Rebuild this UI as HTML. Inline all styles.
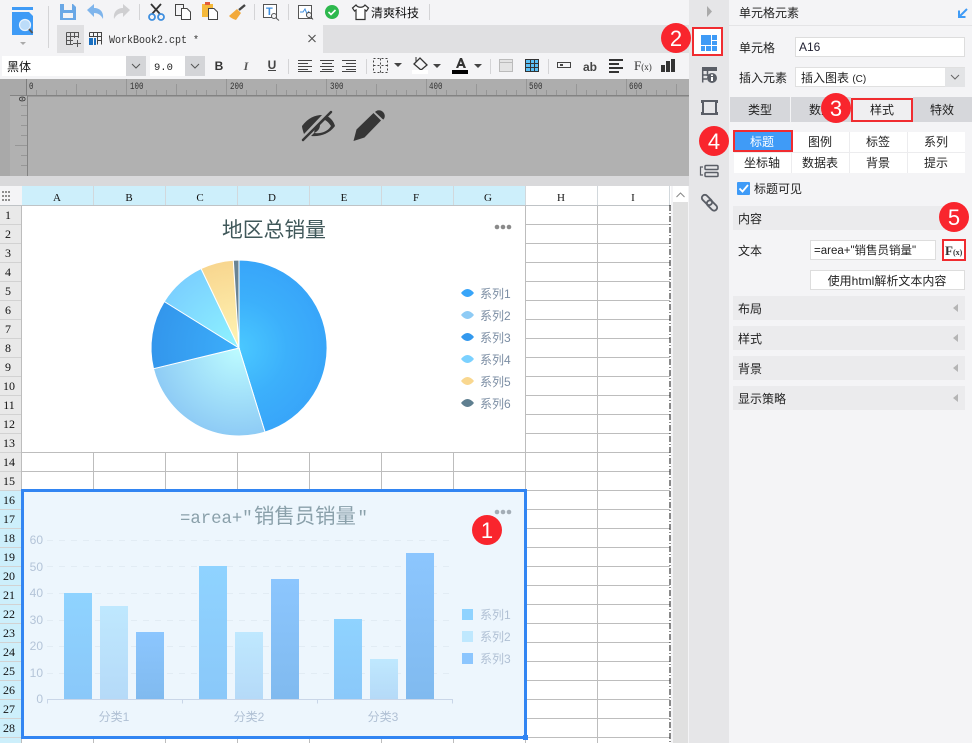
<!DOCTYPE html>
<html><head><meta charset="utf-8"><style>
html,body{margin:0;padding:0;background:#f4f4f6;width:972px;height:743px;overflow:hidden}
svg{display:block;position:absolute;left:0;top:0}
text{font-family:"Liberation Sans","Noto Sans CJK SC",sans-serif;font-size:12px;fill:#222}
.m text,text.m{font-family:"Liberation Mono","Noto Sans CJK SC",monospace}
.r text{font-family:"Liberation Serif",serif;fill:#111}
.c text,text.c{text-anchor:middle}
</style></head><body>
<svg width="972" height="743" viewBox="0 0 972 743" xmlns="http://www.w3.org/2000/svg">
<defs>
<radialGradient id="p1" gradientUnits="userSpaceOnUse" cx="239" cy="348" r="88"><stop offset="0" stop-color="#4ac8ff"/><stop offset=".55" stop-color="#3cb0fb"/><stop offset="1" stop-color="#38a5f9"/></radialGradient>
<radialGradient id="p2" gradientUnits="userSpaceOnUse" cx="239" cy="348" r="88"><stop offset="0" stop-color="#bdfcff"/><stop offset="1" stop-color="#8ecbf5"/></radialGradient>
<radialGradient id="p3" gradientUnits="userSpaceOnUse" cx="239" cy="348" r="88"><stop offset="0" stop-color="#3caefa"/><stop offset="1" stop-color="#3396ec"/></radialGradient>
<radialGradient id="p4" gradientUnits="userSpaceOnUse" cx="239" cy="348" r="88"><stop offset="0" stop-color="#8ef3ff"/><stop offset="1" stop-color="#7bd0ff"/></radialGradient>
<radialGradient id="p5" gradientUnits="userSpaceOnUse" cx="239" cy="348" r="88"><stop offset="0" stop-color="#fff5b5"/><stop offset="1" stop-color="#f8d68f"/></radialGradient>
<linearGradient id="b1" x1="0" y1="0" x2="0" y2="1"><stop offset="0" stop-color="#8fd3ff"/><stop offset="1" stop-color="#8ac8f9"/></linearGradient>
<linearGradient id="b2" x1="0" y1="0" x2="0" y2="1"><stop offset="0" stop-color="#bfe8fe"/><stop offset="1" stop-color="#b5daf8"/></linearGradient>
<linearGradient id="b3" x1="0" y1="0" x2="0" y2="1"><stop offset="0" stop-color="#8cc6fe"/><stop offset="1" stop-color="#80baef"/></linearGradient>
</defs>

<!-- base -->
<rect width="972" height="743" fill="#f4f4f6"/>
<!-- tab strip -->
<rect x="57" y="25" width="632" height="28" fill="#e0e0e2"/>
<rect x="84" y="25" width="239" height="28" fill="#f4f4f6"/>
<!-- ruler + gray area -->
<rect x="0" y="79" width="689" height="97" fill="#b1b1b1"/>
<rect x="0" y="79" width="10" height="97" fill="#a9a9a9"/>
<rect x="0" y="79" width="27" height="17" fill="#a9a9a9"/>
<rect x="27" y="79" width="662" height="16" fill="#adadad"/>
<rect x="27" y="95" width="662" height="1.500" fill="#838383"/>
<rect x="10" y="95" width="17" height="1" fill="#838383"/>
<rect x="26" y="79" width="1" height="17" fill="#7d7d7d"/>
<rect x="27" y="96" width="1" height="80" fill="#838383"/>
<path stroke="#969696" fill="none" d="M36.500 90V95M46.500 90V95M56.500 90V95M66.500 90V95M76.500 84V95M86.500 90V95M96.500 90V95M106.500 90V95M116.500 90V95M126.500 79V95M136.500 90V95M146.500 90V95M156.500 90V95M166.500 90V95M176.500 84V95M186.500 90V95M196.500 90V95M206.500 90V95M216.500 90V95M226.500 79V95M236.500 90V95M246.500 90V95M256.500 90V95M266.500 90V95M276.500 84V95M286.500 90V95M296.500 90V95M306.500 90V95M316.500 90V95M326.500 79V95M336.500 90V95M346.500 90V95M356.500 90V95M366.500 90V95M376.500 84V95M386.500 90V95M396.500 90V95M406.500 90V95M416.500 90V95M426.500 79V95M436.500 90V95M446.500 90V95M456.500 90V95M466.500 90V95M476.500 84V95M486.500 90V95M496.500 90V95M506.500 90V95M516.500 90V95M526.500 79V95M536.500 90V95M546.500 90V95M556.500 90V95M566.500 90V95M576.500 84V95M586.500 90V95M596.500 90V95M606.500 90V95M616.500 90V95M626.500 79V95M636.500 90V95M646.500 90V95M656.500 90V95M666.500 90V95M676.500 84V95"/>
<path stroke="#969696" fill="none" d="M21 105.500H27M21 115.500H27M21 125.500H27M21 135.500H27M15 145.500H27M21 155.500H27M21 165.500H27"/>
<g class="m">
<text x="29" y="89" textLength="4.500" lengthAdjust="spacingAndGlyphs" style="font-size:10.500px;fill:#333">0</text>
<text x="130" y="89" textLength="13.500" lengthAdjust="spacingAndGlyphs" style="font-size:10.500px;fill:#333">100</text>
<text x="230" y="89" textLength="13.500" lengthAdjust="spacingAndGlyphs" style="font-size:10.500px;fill:#333">200</text>
<text x="330" y="89" textLength="13.500" lengthAdjust="spacingAndGlyphs" style="font-size:10.500px;fill:#333">300</text>
<text x="429" y="89" textLength="13.500" lengthAdjust="spacingAndGlyphs" style="font-size:10.500px;fill:#333">400</text>
<text x="529" y="89" textLength="13.500" lengthAdjust="spacingAndGlyphs" style="font-size:10.500px;fill:#333">500</text>
<text x="629" y="89" textLength="13.500" lengthAdjust="spacingAndGlyphs" style="font-size:10.500px;fill:#333">600</text>
<text transform="translate(19,96) rotate(90)" style="font-size:10px;fill:#333">0</text>
</g>
<rect x="0" y="176" width="689" height="10" fill="#d9d9db"/>

<!-- eye-off -->
<path fill="#363636" d="M302 126C308 118 315 115 322 115L304 134C303 131 302 128 302 126ZM327 116C331 118 334 122 335 126C330 133 321 137 311 136L314 133C322 134 328 131 331 126C329 123 327 121 325 120L320 125C320 129 317 132 314 133L315 128L327 116Z"/>
<path stroke="#363636" stroke-width="2.400" stroke-linecap="round" d="M303 140L331 112"/>
<!-- pencil -->
<path fill="#363636" d="M353.500 141L356.500 129.500L373.500 113L381 120.500L364.500 137.500Z"/>
<path fill="#363636" d="M375.500 111.500C378 109.500 381 110 383 112C385 114 385.500 117 383.500 119.500L382.500 119L375 112Z"/>

<!-- column header -->
<rect x="0" y="186" width="22" height="19" fill="#f4f4f6"/>
<path fill="#8e8e8e" d="M2 191h2v2h-2zM5 191h2v2h-2zM8 191h2v2h-2zM2 195h2v2h-2zM5 195h2v2h-2zM8 195h2v2h-2zM2 199h2v2h-2zM5 199h2v2h-2zM8 199h2v2h-2z"/>
<rect x="22" y="186" width="504" height="19" fill="#cdeffb"/>
<rect x="526" y="186" width="145" height="19" fill="#fff"/>
<path stroke="#d2d8dc" fill="none" d="M93.500 186V205M165.500 186V205M237.500 186V205M309.500 186V205M381.500 186V205M453.500 186V205M525.500 186V205M597.500 186V205M669.500 186V205"/>
<rect x="0" y="205" width="671" height="1" fill="#bfc3c6"/>
<g class="r c">
<text x="57" y="201" style="font-size:11px">A</text><text x="129" y="201" style="font-size:11px">B</text><text x="200" y="201" style="font-size:11px">C</text><text x="272" y="201" style="font-size:11px">D</text><text x="344" y="201" style="font-size:11px">E</text><text x="416" y="201" style="font-size:11px">F</text><text x="488" y="201" style="font-size:11px">G</text><text x="561" y="201" style="font-size:11px">H</text><text x="633" y="201" style="font-size:11px">I</text>
</g>

<!-- row header -->
<rect x="0" y="206" width="21" height="284" fill="#e9e9e9"/>
<rect x="0" y="490" width="21" height="253" fill="#cdeffb"/>
<rect x="21" y="206" width="1" height="537" fill="#bdbdbd"/>
<path stroke="#d2d2d2" fill="none" d="M0 224.500H21M0 243.500H21M0 262.500H21M0 281.500H21M0 300.500H21M0 319.500H21M0 338.500H21M0 357.500H21M0 376.500H21M0 395.500H21M0 414.500H21M0 433.500H21M0 452.500H21M0 471.500H21M0 490.500H21M0 509.500H21M0 528.500H21M0 547.500H21M0 566.500H21M0 585.500H21M0 604.500H21M0 623.500H21M0 642.500H21M0 661.500H21M0 680.500H21M0 699.500H21M0 718.500H21M0 737.500H21"/>
<g class="r c">
<text x="8" y="219">1</text><text x="8" y="238">2</text><text x="8" y="257">3</text><text x="8" y="276">4</text><text x="8" y="295">5</text><text x="8" y="314">6</text><text x="8" y="333">7</text><text x="8" y="352">8</text><text x="8" y="371">9</text>
<text x="9" y="390">10</text><text x="9" y="409">11</text><text x="9" y="428">12</text><text x="9" y="447">13</text><text x="9" y="466">14</text><text x="9" y="485">15</text><text x="9" y="504">16</text><text x="9" y="523">17</text><text x="9" y="542">18</text><text x="9" y="561">19</text><text x="9" y="580">20</text><text x="9" y="599">21</text><text x="9" y="618">22</text><text x="9" y="637">23</text><text x="9" y="656">24</text><text x="9" y="675">25</text><text x="9" y="694">26</text><text x="9" y="713">27</text><text x="9" y="732">28</text>
</g>

<!-- grid -->
<rect x="22" y="206" width="649" height="537" fill="#fff"/>
<path stroke="#bdbdbd" fill="none" d="M22 224.500H670M22 243.500H670M22 262.500H670M22 281.500H670M22 300.500H670M22 319.500H670M22 338.500H670M22 357.500H670M22 376.500H670M22 395.500H670M22 414.500H670M22 433.500H670M22 452.500H670M22 471.500H670M22 490.500H670M22 509.500H670M22 528.500H670M22 547.500H670M22 566.500H670M22 585.500H670M22 604.500H670M22 623.500H670M22 642.500H670M22 661.500H670M22 680.500H670M22 699.500H670M22 718.500H670M22 737.500H670M93.500 206V743M165.500 206V743M237.500 206V743M309.500 206V743M381.500 206V743M453.500 206V743M525.500 206V743M597.500 206V743"/>
<path stroke="#111" fill="none" stroke-dasharray="6 2 1 2" d="M670 205V743"/>
<rect x="673" y="186" width="15" height="557" fill="#e0e0e0"/>
<rect x="673" y="186" width="15" height="16" fill="#fff"/>
<path stroke="#888" fill="none" d="M676.500 197L680.500 193L684.500 197"/>

<!-- pie chart -->
<rect x="22" y="206" width="503" height="246" fill="#fff"/>
<text class="c" x="274" y="237" style="font-size:20.800px;fill:#40585a">地区总销量</text>
<g fill="#8a8a8a"><circle cx="497" cy="227" r="2.300"/><circle cx="503" cy="227" r="2.300"/><circle cx="509" cy="227" r="2.300"/></g>
<g stroke="#fff" stroke-width="1">
<path fill="url(#p1)" d="M239 348V260A88 88 0 0 1 265 432.100Z"/>
<path fill="url(#p2)" d="M239 348L265 432.100A88 88 0 0 1 153.500 368.700Z"/>
<path fill="url(#p3)" d="M239 348L153.500 368.700A88 88 0 0 1 164.300 301.500Z"/>
<path fill="url(#p4)" d="M239 348L164.300 301.500A88 88 0 0 1 201.100 268.600Z"/>
<path fill="url(#p5)" d="M239 348L201.100 268.600A88 88 0 0 1 233.300 260.200Z"/>
<path fill="#6a8494" d="M239 348L233.300 260.200A88 88 0 0 1 239 260Z"/>
</g>
<path fill="#38a5f9" d="M461 293Q467.500 285 474 293Q467.500 301 461 293Z"/>
<path fill="#8ecbf5" d="M461 315Q467.500 307 474 315Q467.500 323 461 315Z"/>
<path fill="#3399ee" d="M461 337Q467.500 329 474 337Q467.500 345 461 337Z"/>
<path fill="#7bd1ff" d="M461 359Q467.500 351 474 359Q467.500 367 461 359Z"/>
<path fill="#f9d78f" d="M461 381Q467.500 373 474 381Q467.500 389 461 381Z"/>
<path fill="#5f7f90" d="M461 403Q467.500 395 474 403Q467.500 411 461 403Z"/>
<text x="480" y="298" style="fill:#7b8da3">系列1</text><text x="480" y="320" style="fill:#7b8da3">系列2</text><text x="480" y="342" style="fill:#7b8da3">系列3</text><text x="480" y="364" style="fill:#7b8da3">系列4</text><text x="480" y="386" style="fill:#7b8da3">系列5</text><text x="480" y="408" style="fill:#7b8da3">系列6</text>

<!-- bar chart -->
<rect x="22" y="491" width="503" height="246" fill="#edf6fd"/>
<text x="180" y="523" class="m" style="font-size:17.300px;fill:#8aa0aa">=area+"</text>
<text x="254" y="523" style="font-size:20.400px;fill:#8aa0aa">销售员销量</text>
<text x="357.500" y="523" class="m" style="font-size:17.300px;fill:#8aa0aa">"</text>
<g fill="#a3adb6"><circle cx="497" cy="512" r="2.300"/><circle cx="503" cy="512" r="2.300"/><circle cx="509" cy="512" r="2.300"/></g>
<path stroke="#e2ecf4" fill="none" stroke-dasharray="6 6" d="M47 540.500H449M47 566.500H449M47 593.500H449M47 620.500H449M47 646.500H449M47 673.500H449"/>
<rect x="64" y="593" width="28" height="106" fill="url(#b1)"/><rect x="100" y="606" width="28" height="93" fill="url(#b2)"/><rect x="136" y="632" width="28" height="67" fill="url(#b3)"/>
<rect x="199" y="566" width="28" height="133" fill="url(#b1)"/><rect x="235" y="632" width="28" height="67" fill="url(#b2)"/><rect x="271" y="579" width="28" height="120" fill="url(#b3)"/>
<rect x="334" y="619" width="28" height="80" fill="url(#b1)"/><rect x="370" y="659" width="28" height="40" fill="url(#b2)"/><rect x="406" y="553" width="28" height="146" fill="url(#b3)"/>
<path stroke="#c9d6e8" fill="none" d="M47.500 703.500V699.500H452.500V703.500M182.500 699.500V703.500M317.500 699.500V703.500"/>
<text x="43" y="544" style="fill:#b4c4d8;text-anchor:end">60</text><text x="43" y="571" style="fill:#b4c4d8;text-anchor:end">50</text><text x="43" y="597" style="fill:#b4c4d8;text-anchor:end">40</text><text x="43" y="624" style="fill:#b4c4d8;text-anchor:end">30</text><text x="43" y="650" style="fill:#b4c4d8;text-anchor:end">20</text><text x="43" y="677" style="fill:#b4c4d8;text-anchor:end">10</text><text x="43" y="703" style="fill:#b4c4d8;text-anchor:end">0</text>
<text class="c" x="114" y="721" style="fill:#b0c0d4">分类1</text><text class="c" x="249" y="721" style="fill:#b0c0d4">分类2</text><text class="c" x="383" y="721" style="fill:#b0c0d4">分类3</text>
<rect x="462" y="609" width="11" height="11" fill="#8fd3ff"/><rect x="462" y="631" width="11" height="11" fill="#bfe8fe"/><rect x="462" y="653" width="11" height="11" fill="#8cc6fe"/>
<text x="480" y="619" style="fill:#b0c0d4">系列1</text><text x="480" y="641" style="fill:#b0c0d4">系列2</text><text x="480" y="663" style="fill:#b0c0d4">系列3</text>
<rect x="22.500" y="490.500" width="503" height="247" fill="none" stroke="#3285f2" stroke-width="3"/>
<rect x="523" y="735" width="5" height="5" fill="#3285f2"/>

<!-- top toolbar -->
<path fill="#3f9bf6" d="M12 12H29L33 16V35H12Z"/><rect x="12" y="7" width="21" height="3" fill="#3f9bf6"/>
<circle cx="25" cy="25" r="5.500" fill="#bcdcf9" stroke="#e9f3fd" stroke-width="1.200"/><path stroke="#555" stroke-width="1.800" d="M29 29L32.500 33"/>
<path fill="#aaa" d="M20 42H26L23 45Z"/>
<path stroke="#d4d4d6" fill="none" d="M48.500 6V48M139.500 4V20M254.500 4V20M288.500 4V20M429.500 4V20M366.500 59V74M288.500 59V74M490.500 59V74M548.500 59V74"/>
<!-- save -->
<path fill="#6aa8e6" d="M60 4H73L76 7V20H60Z"/><rect x="64" y="4" width="8" height="6" fill="#f4f4f6"/><rect x="63" y="13" width="10" height="5" fill="#f4f4f6"/>
<!-- undo / redo -->
<path fill="#7fb5ec" d="M87 10L94 4V8C100 8 104 12 103 19C101 15 98 13 94 13V17Z"/>
<path fill="#cfcfd1" d="M130 10L123 4V8C117 8 113 12 114 19C116 15 119 13 123 13V17Z"/>
<!-- scissors -->
<path stroke="#333" stroke-width="1.800" fill="none" d="M151 4L160 14M161 4L152 14"/><circle cx="152" cy="17" r="3" fill="none" stroke="#3f8fe0" stroke-width="1.800"/><circle cx="161" cy="17" r="3" fill="none" stroke="#3f8fe0" stroke-width="1.800"/>
<!-- copy -->
<path fill="#f4f4f6" stroke="#444" d="M175.500 4.500H183.500V15.500H175.500Z"/><path fill="#fff" stroke="#444" d="M181.500 8.500H187L190.500 12V19.500H181.500Z"/>
<!-- paste -->
<rect x="202" y="4" width="11" height="13" fill="#f5b93a"/><rect x="205" y="2" width="5" height="3" fill="#e25b3a"/><path fill="#fff" stroke="#444" d="M208.500 8.500H214L217.500 12V19.500H208.500Z"/>
<!-- brush -->
<path fill="#f2a93b" d="M229 16L237 9L241 13L236 20C233 19 231 18 229 16Z"/><path stroke="#444" stroke-width="2.400" d="M239 10L245 5"/>
<!-- T search -->
<rect x="263.500" y="4.500" width="13" height="13" fill="#fff" stroke="#555"/><text x="266" y="15" style="font-size:11px;font-weight:bold;fill:#3f8fe0">T</text><circle cx="274" cy="16" r="2.500" fill="#f4f4f6" stroke="#555"/><path stroke="#555" d="M276 18L279 20.500"/>
<!-- chart search -->
<rect x="298.500" y="5.500" width="13" height="13" fill="#fff" stroke="#555"/><path stroke="#3f8fe0" fill="none" d="M300 12L303 12L305 9L307 14L309 11"/><circle cx="309" cy="15" r="2.500" fill="#f4f4f6" stroke="#444"/><path stroke="#444" d="M311 17L313 19.500"/>
<!-- check -->
<circle cx="332" cy="12" r="7" fill="#2db84d"/><path stroke="#fff" stroke-width="1.600" fill="none" d="M328.500 12L331 14.500L335.500 10"/>
<!-- shirt -->
<path fill="#fff" stroke="#333" stroke-width="1.200" d="M356 5L352.500 8L354.500 11L356 10V19.500H365V10L366.500 11L368.500 8L365 5C363 8 358 8 356 5Z"/>
<text x="371" y="17" style="font-size:12px;fill:#111">清爽科技</text>

<!-- tab -->
<path stroke="#555" fill="none" d="M66.500 32.500H78.500V38M66.500 32.500V44.500H73M66.500 36.500H78.500M66.500 40.500H73M70.500 32.500V44.500M74.500 32.500V38M73 43.500H81M77.500 40V47"/>
<path stroke="#444" fill="none" d="M89.500 32.500H101.500V44.500M89.500 32.500V37M89.500 36.500H101.500M93.500 32.500V37M97.500 32.500V44.500M97.500 40.500H101.500"/>
<path fill="#1a6fc0" d="M89 38H93V45H89ZM94 38H96V45H94Z"/>
<text x="109" y="43" class="m" textLength="90" lengthAdjust="spacingAndGlyphs" style="font-size:11px;fill:#333">WorkBook2.cpt *</text>
<path stroke="#555" stroke-width="1.200" d="M308.500 35L315.500 42M315.500 35L308.500 42"/>

<!-- format toolbar -->
<rect x="2" y="56" width="124" height="20" fill="#fff"/><rect x="126" y="56" width="20" height="20" fill="#d4d5d8"/>
<rect x="150" y="56" width="35" height="20" fill="#fff"/><rect x="185" y="56" width="20" height="20" fill="#d4d5d8"/>
<path stroke="#555" fill="none" d="M132 64L136 68L140 64M191 64L195 68L199 64"/>
<text x="7" y="71" style="font-size:12px;fill:#111">黑体</text>
<text x="154" y="70" class="m" style="font-size:10.500px;fill:#222">9.0</text>
<text class="c" x="219" y="70" style="font-size:12px;font-weight:bold;fill:#333">B</text>
<text class="c" x="246" y="70" style="font-size:12px;font-weight:bold;font-style:italic;fill:#555;font-family:'Liberation Serif',serif">I</text>
<text class="c" x="272" y="69" style="font-size:12px;font-weight:bold;fill:#444">U</text><rect x="268" y="70" width="8" height="1" fill="#444"/>
<path stroke="#444" fill="none" d="M298 60.500H312M298 63.500H308M298 66.500H312M298 69.500H308M298 71.500H312M320 60.500H334M322 63.500H332M320 66.500H334M322 69.500H332M320 71.500H334M342 60.500H356M346 63.500H356M342 66.500H356M346 69.500H356M342 71.500H356"/>
<path stroke="#444" fill="none" stroke-dasharray="2 2" d="M373.500 58.500H387.500V72.500H373.500ZM380.500 58.500V72.500M373.500 65.500H387.500"/>
<path fill="#444" d="M394 63H402L398 67ZM433 64H441L437 68ZM474 64H482L478 68Z"/>
<path fill="#f4f4f6" stroke="#333" stroke-width="1.300" d="M414 64L420 58L427 65L421 70Z"/><path stroke="#333" d="M416 57V62"/>
<rect x="412" y="70" width="16" height="4" fill="#fff"/>
<path fill="#333" d="M456 68L460 58H462L466 68H463.500L462.800 66H459L458.300 68ZM459.800 64H462L460.900 61Z"/>
<rect x="452" y="70" width="16" height="4" fill="#000"/>
<rect x="499.500" y="59.500" width="13" height="12" fill="#e4e4e4" stroke="#bbb"/><path stroke="#bbb" d="M499 62.500H513"/>
<rect x="525.500" y="59.500" width="13" height="12" fill="#5cc0f5" stroke="#333"/><path stroke="#333" fill="none" d="M525 63.500H539M525 67.500H539M530.500 59V72M534.500 59V72"/>
<rect x="557.500" y="62.500" width="13" height="5" fill="none" stroke="#444"/><rect x="560" y="64" width="3" height="2" fill="#444"/>
<text class="c" x="590" y="71" style="font-size:12px;font-weight:bold;fill:#444">ab</text>
<path fill="#333" d="M609 59H623V61H609ZM609 63H619V65H609ZM609 67H623V69H609ZM609 71H619V73H609Z"/>
<text x="634" y="70" style="font-family:'Liberation Serif',serif;font-size:13px;fill:#333">F<tspan style="font-size:9px">(x)</tspan></text>
<path fill="#333" d="M661 65H665V72H661ZM666 61H670V72H666ZM671 59H675V72H671Z"/>

<!-- sidebar -->
<rect x="689" y="0" width="40" height="743" fill="#e6e6e8"/>
<path fill="#aaa" d="M707 6L712 11.500L707 17Z"/>
<rect x="693" y="28" width="29" height="27" fill="#fff" stroke="#f02c30" stroke-width="2"/>
<path fill="#3f9bf6" d="M701 35H711V45H701ZM712 35H717V40H712ZM712 41H717V45H712ZM701 46H705V51H701ZM706 46H711V51H706ZM712 46H717V51H712Z"/>
<path fill="#5a5e66" d="M702 67H717V71H702Z"/>
<path stroke="#5a5e66" stroke-width="1.500" fill="none" d="M702.700 82.500V68M702.700 75H709M702.700 79H707M707.500 69V76"/><circle cx="712" cy="78" r="5" fill="#5a5e66"/><rect x="711" y="77" width="2" height="4" fill="#fff"/><rect x="711" y="74.500" width="2" height="1.500" fill="#fff"/>
<rect x="703" y="101" width="13" height="13" fill="none" stroke="#5a5e66" stroke-width="2"/><path fill="#5a5e66" d="M701 100h3v3h-3zM715 100h3v3h-3zM701 112h3v3h-3zM715 112h3v3h-3z"/>
<rect x="705" y="165.500" width="13" height="4" rx="1" fill="none" stroke="#5a5e66" stroke-width="1.500"/><rect x="705" y="172.500" width="13" height="4" rx="1" fill="none" stroke="#5a5e66" stroke-width="1.500"/><path stroke="#5a5e66" fill="none" stroke-width="1.200" d="M703 167H700.500V175H703"/>
<rect x="-6" y="-3" width="12" height="6" rx="3" transform="translate(707,200) rotate(45)" fill="none" stroke="#5a5e66" stroke-width="1.900"/>
<rect x="-6" y="-3" width="12" height="6" rx="3" transform="translate(712,205.500) rotate(45)" fill="none" stroke="#5a5e66" stroke-width="1.900"/>

<!-- right panel -->
<rect x="729" y="0" width="243" height="743" fill="#f4f4f6"/>
<rect x="729" y="25" width="243" height="1" fill="#e4e4e6"/>
<text x="739" y="17" style="fill:#222">单元格元素</text>
<path stroke="#3f9bf6" stroke-width="2" fill="none" d="M967 9L960 16M959 10.500V17H965.500"/>
<text x="739" y="52" style="font-size:12px">单元格</text>
<rect x="795.500" y="37.500" width="169" height="19" fill="#fff" stroke="#ddd"/>
<text x="799" y="51" style="fill:#223">A16</text>
<text x="739" y="82">插入元素</text>
<rect x="795.500" y="67.500" width="169" height="19" fill="#fff" stroke="#e0e0e0"/><rect x="945" y="68" width="20" height="19" fill="#e3e4e6"/>
<path stroke="#666" fill="none" d="M951 75L955 79L959 75"/>
<text x="801" y="82">插入图表 <tspan style="font-size:10px">(C)</tspan></text>
<rect x="730" y="97" width="60" height="25" fill="#d6d7db"/><rect x="791" y="97" width="60" height="25" fill="#d6d7db"/><rect x="852" y="97" width="60" height="25" fill="#efeff1"/><rect x="913" y="97" width="59" height="25" fill="#d6d7db"/>
<rect x="852" y="99" width="60" height="22" fill="none" stroke="#f02c30" stroke-width="2"/>
<text class="c" x="760" y="114">类型</text><text class="c" x="821" y="114">数据</text><text class="c" x="882" y="114">样式</text><text class="c" x="942" y="114">特效</text>
<rect x="734" y="132" width="231" height="41" fill="#fff"/>
<path stroke="#ececee" fill="none" d="M734 152.500H965M791.500 132V173M849.500 132V173M907.500 132V173"/>
<rect x="734" y="131" width="58" height="20" fill="#3f9bf7" stroke="#f02c30" stroke-width="2"/>
<text class="c" x="762" y="146" style="fill:#fff">标题</text><text class="c" x="820" y="146">图例</text><text class="c" x="878" y="146">标签</text><text class="c" x="936" y="146">系列</text>
<text class="c" x="762" y="167">坐标轴</text><text class="c" x="820" y="167">数据表</text><text class="c" x="878" y="167">背景</text><text class="c" x="936" y="167">提示</text>
<rect x="737" y="182" width="13" height="13" rx="1" fill="#3f9bf7"/><path stroke="#fff" stroke-width="1.800" fill="none" d="M739.500 188.500L742.500 191.500L748 185"/>
<text x="754" y="193">标题可见</text>
<rect x="733" y="206" width="232" height="24" fill="#ebebed"/><text x="738" y="223">内容</text>
<text x="738" y="255">文本</text>
<rect x="810.500" y="240.500" width="125" height="19" fill="#fff" stroke="#ddd"/>
<text x="814" y="254" style="font-size:11.500px">=area+"销售员销量"</text>
<rect x="943" y="240" width="22" height="20" fill="#fff" stroke="#f02c30" stroke-width="2"/>
<text x="945" y="255" style="font-family:'Liberation Serif',serif;font-size:13px;font-weight:bold;fill:#333">F<tspan style="font-size:8px">(x)</tspan></text>
<rect x="810.500" y="270.500" width="154" height="19" fill="#fff" stroke="#ddd"/>
<text class="c" x="887" y="285">使用html解析文本内容</text>
<rect x="733" y="296" width="232" height="24" fill="#ebebed"/><text x="738" y="313">布局</text><path fill="#b5b5b5" d="M958 304V312L953 308Z"/>
<rect x="733" y="326" width="232" height="24" fill="#ebebed"/><text x="738" y="343">样式</text><path fill="#b5b5b5" d="M958 334V342L953 338Z"/>
<rect x="733" y="356" width="232" height="24" fill="#ebebed"/><text x="738" y="373">背景</text><path fill="#b5b5b5" d="M958 364V372L953 368Z"/>
<rect x="733" y="386" width="232" height="24" fill="#ebebed"/><text x="738" y="403">显示策略</text><path fill="#b5b5b5" d="M958 394V402L953 398Z"/>

<!-- badges -->
<g fill="#f9252d"><circle cx="487" cy="530" r="15"/><circle cx="676" cy="38" r="15"/><circle cx="836" cy="108" r="15"/><circle cx="714" cy="141" r="15"/><circle cx="954" cy="217" r="15"/></g>
<text class="c" x="487" y="538" style="font-size:22px;fill:#fff">1</text>
<text class="c" x="676" y="46" style="font-size:22px;fill:#fff">2</text>
<text class="c" x="836" y="116" style="font-size:22px;fill:#fff">3</text>
<text class="c" x="714" y="149" style="font-size:22px;fill:#fff">4</text>
<text class="c" x="954" y="225" style="font-size:22px;fill:#fff">5</text>
</svg>
</body></html>
